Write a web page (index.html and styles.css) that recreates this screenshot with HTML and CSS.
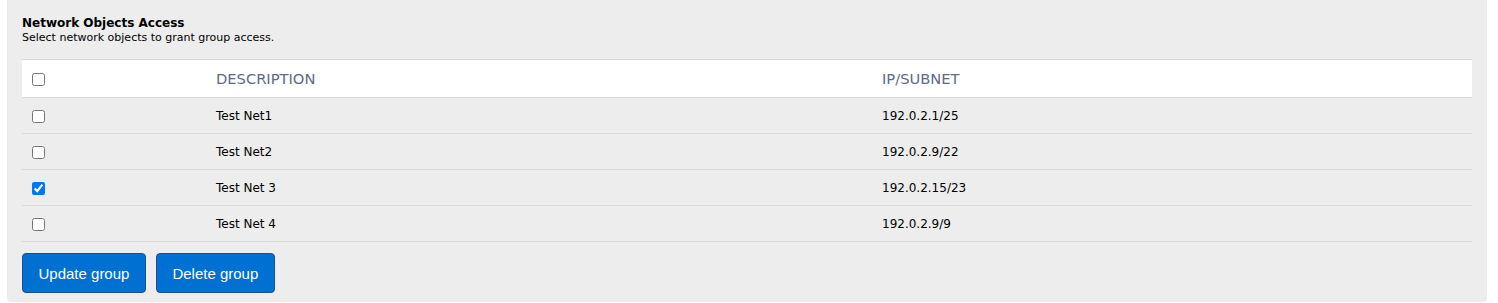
FILE: index.html
```html
<!DOCTYPE html>
<html lang="en">
<head>
    <meta charset="UTF-8">
    <title>Network Objects Access</title>
    <link rel="stylesheet" href="styles.css">
</head>
<body>
    <div class="panel">
        <h2 class="panel-title">Network Objects Access</h2>
        <p class="panel-hint">Select network objects to grant group access.</p>

        <table class="objects">
            <thead>
                <tr>
                    <th class="col-check"><input type="checkbox"></th>
                    <th class="col-desc">Description</th>
                    <th>IP/Subnet</th>
                </tr>
            </thead>
            <tbody>
                <tr>
                    <td class="col-check"><input type="checkbox"></td>
                    <td>Test Net1</td>
                    <td>192.0.2.1/25</td>
                </tr>
                <tr>
                    <td class="col-check"><input type="checkbox"></td>
                    <td>Test Net2</td>
                    <td>192.0.2.9/22</td>
                </tr>
                <tr>
                    <td class="col-check"><input type="checkbox" checked></td>
                    <td>Test Net 3</td>
                    <td>192.0.2.15/23</td>
                </tr>
                <tr>
                    <td class="col-check"><input type="checkbox"></td>
                    <td>Test Net 4</td>
                    <td>192.0.2.9/9</td>
                </tr>
            </tbody>
        </table>

        <div class="actions">
            <button class="btn">Update group</button>
            <button class="btn">Delete group</button>
        </div>
    </div>
</body>
</html>
```

FILE: styles.css
```css
* {
    margin: 0;
    padding: 0;
    box-sizing: border-box;
}

body {
    font-family: "DejaVu Sans", Verdana, sans-serif;
    background: #fff;
    padding: 0 11px 1px 7px;
}

.panel {
    background: #ededed;
    border-radius: 0 0 4px 4px;
    padding: 16px 15px 9px;
}

.panel-title {
    font-size: 12px;
    font-weight: bold;
    color: #000;
    line-height: 15px;
}

.panel-hint {
    font-size: 11px;
    color: #000;
    line-height: 13px;
    margin-bottom: 15px;
}

.objects {
    width: 100%;
    border-collapse: collapse;
    font-size: 12px;
}

.objects th,
.objects td {
    text-align: left;
    padding: 0 10px;
    border-top: 1px solid #d9d9dd;
    border-bottom: 1px solid #d9d9dd;
    vertical-align: middle;
}

.objects th {
    height: 38px;
    background: #fff;
    font-weight: normal;
    text-transform: uppercase;
    color: #5e6b82;
    font-size: 14.7px;
}

.objects td {
    color: #000;
    height: 36px;
}

.objects .col-check {
    width: 184px;
}

.objects .col-desc {
    width: 666px;
}

.objects input[type="checkbox"] {
    display: block;
    margin: 1px 0 0;
    width: 13px;
    height: 13px;
}

.actions {
    display: flex;
    gap: 10px;
    margin-top: 11px;
}

.btn {
    font-family: "Liberation Sans", Arial, sans-serif;
    font-size: 15px;
    color: #fff;
    background: #0070d2;
    border: 1px solid #1c4f8b;
    border-radius: 4px;
    height: 40px;
    padding: 0 15.5px;
    cursor: pointer;
}

.btn:hover {
    background: #005fb2;
}
```
